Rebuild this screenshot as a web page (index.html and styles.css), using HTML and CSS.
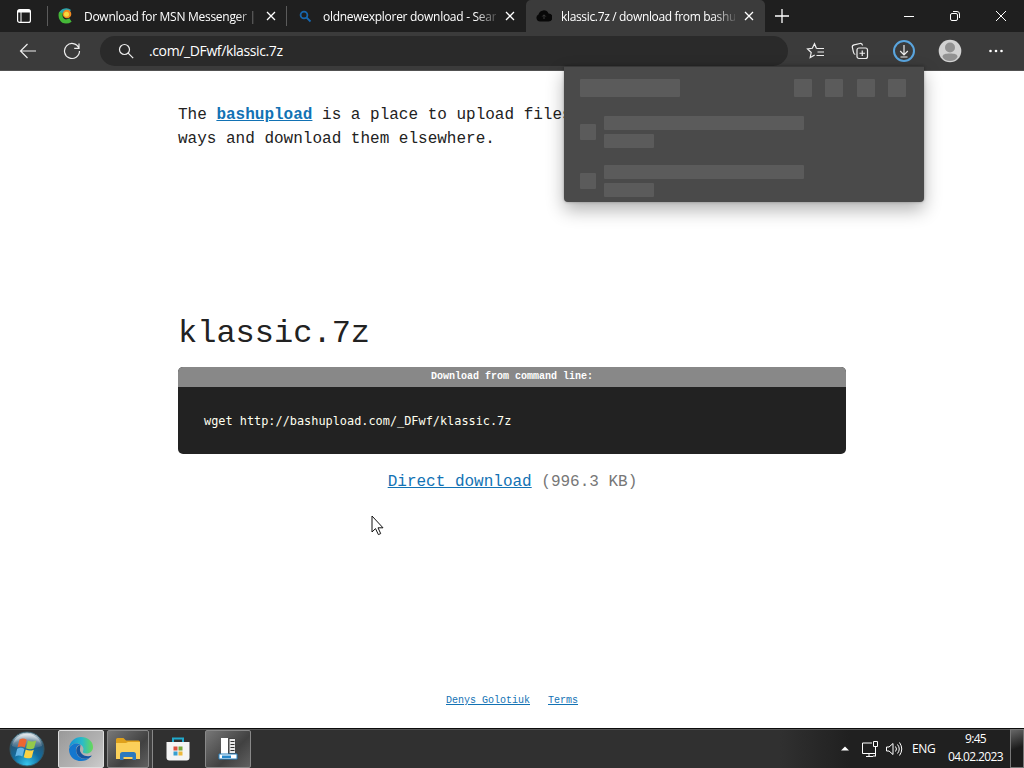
FILE: index.html
```html
<!DOCTYPE html>
<html lang="en">
<head>
  <meta charset="UTF-8">
  <title>klassic.7z / download from bashupload</title>
  <link rel="stylesheet" href="styles.css">
</head>
<body>
  <div class="tabs">
    <div class="tab-actions">
      <svg width="16" height="16" viewBox="0 0 16 16" fill="none" stroke="#fff" stroke-width="1.2"><rect x="1.600" y="1.600" width="12.800" height="12.800" rx="2"/><path d="M2 3.200h12" stroke-width="2.600"/><path d="M5 4v10" stroke-width="1"/></svg>
    </div>
    <div class="tab tab-first">
      <svg class="favicon" width="16" height="16" viewBox="0 0 16 16"><path d="M12 3.200C9.500 .8 4 1.500 2.500 5.500" fill="none" stroke="#2ba6b0" stroke-width="3"/><path d="M3 4.500C1.500 9 4 13.500 8 13.500c2 0 3.500-.8 4.500-1.500" fill="none" stroke="#45b838" stroke-width="4"/><circle cx="9" cy="6" r="4.300" fill="#f28a22"/><circle cx="8.500" cy="6.300" r="2.500" fill="#f8dc3d"/></svg>
      <span class="tab-title">Download for MSN Messenger |</span>
      <svg class="close" width="10" height="10" viewBox="0 0 10 10"><path d="M1 1l8 8M9 1L1 9"/></svg>
    </div>
    <div class="tab tab-second">
      <svg class="favicon" width="16" height="16" viewBox="0 0 16 16" fill="none" stroke="#1767ae" stroke-width="1.800"><circle cx="7" cy="7" r="3.400"/><path d="M9.500 9.500l4 4"/></svg>
      <span class="tab-title">oldnewexplorer download - Sear</span>
      <svg class="close" width="10" height="10" viewBox="0 0 10 10"><path d="M1 1l8 8M9 1L1 9"/></svg>
    </div>
    <div class="tab tab-active">
      <svg class="favicon" width="16" height="16" viewBox="0 0 16 16"><path d="M4 13.500a3.700 3.700 0 0 1-1.500-7A5.300 5.300 0 0 1 12.500 5.500 4 4 0 0 1 12.300 13.500z" fill="#080808"/><path d="M8 11V7M6.300 8.500L8 6.800l1.700 1.700" fill="none" stroke="#3b3b3b"/></svg>
      <span class="tab-title">klassic.7z / download from bashu</span>
      <svg class="close" width="10" height="10" viewBox="0 0 10 10"><path d="M1 1l8 8M9 1L1 9"/></svg>
    </div>
    <svg class="new-tab" width="14" height="14" viewBox="0 0 14 14"><path d="M7 0v14M0 7h14"/></svg>
    <div class="window-buttons">
      <svg width="12" height="12" viewBox="0 0 12 12"><path d="M1 6.500h10"/></svg>
      <svg width="12" height="12" viewBox="0 0 12 12"><rect x="1.500" y="3.500" width="7" height="7" rx="1.500"/><path d="M4 1.500h4a2.500 2.500 0 0 1 2.500 2.500v4"/></svg>
      <svg width="12" height="12" viewBox="0 0 12 12"><path d="M1 1l10 10M11 1L1 11"/></svg>
    </div>
  </div>

  <div class="toolbar">
    <svg class="back" width="18" height="18" viewBox="0 0 18 18"><path d="M17 9H1.500M8.500 2l-7 7 7 7"/></svg>
    <svg class="reload" width="18" height="18" viewBox="0 0 18 18"><path d="M15.800 5.800A7.500 7.500 0 1 0 16.500 9M16 1.500v4.800h-4.800"/></svg>
    <div class="address">
      <svg width="16" height="16" viewBox="0 0 16 16"><circle cx="6.500" cy="6.500" r="5"/><path d="M10.200 10.200l5 5"/></svg>
      <span>.com/_DFwf/klassic.7z</span>
    </div>
    <div class="tools">
      <svg width="20" height="18" viewBox="0 0 20 18"><path d="M10.500 6.500L8.500 1.800 6.300 6.300 1.500 7l3.700 3.500-1 5 4.500-2.500M10.500 6.500h7.500M11.500 10h6.500M10.500 13.500h7.500"/></svg>
      <svg width="20" height="18" viewBox="0 0 20 18"><rect x="7" y="6" width="10.500" height="10.500" rx="2"/><path d="M12.250 8.500v5.500M9.500 11.250h5.500M5.300 12.500C4 12.300 3.700 11.500 3.400 10L2.400 5.500C2 4 2.500 3.200 4 2.800l6-1.300c1.500-.3 2.300.5 2.600 2"/></svg>
      <svg width="24" height="24" viewBox="0 0 24 24"><circle cx="12" cy="12" r="10" stroke="#5aa5de" stroke-width="2"/><path d="M12 6v9.500M8.200 12l3.800 3.800 3.800-3.800M8.500 18h7"/></svg>
      <svg width="24" height="24" viewBox="0 0 24 24" stroke="none"><circle cx="12" cy="12" r="11.300" fill="#d2d2d2"/><circle cx="12" cy="8.500" r="5" fill="#929292"/><path d="M4.500 18c0-3 3-3.500 7.500-3.500s7.500.5 7.500 3.500c-1.500 2.500-4 4-7.500 4s-6-1.500-7.500-4z" fill="#929292"/></svg>
      <svg width="18" height="18" viewBox="0 0 18 18" stroke="none" fill="#fff"><circle cx="3.500" cy="9" r="1.300"/><circle cx="9" cy="9" r="1.300"/><circle cx="14.500" cy="9" r="1.300"/></svg>
    </div>
  </div>

  <div class="page">
    <p class="intro">The <a href="#"><b>bashupload</b></a> is a place to upload files in simple<br>ways and download them elsewhere.</p>
    <h1>klassic.7z</h1>
    <div class="command">
      <div class="command-title">Download from command line:</div>
      <code>wget http://bashupload.com/_DFwf/klassic.7z</code>
    </div>
    <p class="direct"><a href="#">Direct download</a> (996.3 KB)</p>
    <div class="footer"><a href="#">Denys Golotiuk</a><a href="#">Terms</a></div>
  </div>

  <div class="downloads">
    <div class="downloads-head">
      <i class="bone title"></i><i class="bone button"></i><i class="bone button"></i><i class="bone button"></i><i class="bone button"></i>
    </div>
    <div class="item"><i class="bone icon"></i><div><i class="bone name"></i><i class="bone status"></i></div></div>
    <div class="item"><i class="bone icon"></i><div><i class="bone name"></i><i class="bone status"></i></div></div>
  </div>

  <svg class="cursor" width="14" height="22" viewBox="0 0 14 22"><path d="M1 1v16l3.500-3.400 2.900 6 2.300-1-2.700-5.800h5z" fill="#fff" stroke="#111"/></svg>

  <div class="taskbar">
    <svg class="start" width="36" height="36" viewBox="0 0 36 36">
      <defs>
        <radialGradient id="orb" cx=".5" cy=".95" r=".9"><stop offset="0" stop-color="#35c6ed"/><stop offset=".45" stop-color="#126da0"/><stop offset=".8" stop-color="#295573"/><stop offset="1" stop-color="#b5c7d1"/></radialGradient>
        <linearGradient id="shine" x2="0" y2="1"><stop offset="0" stop-color="#fff" stop-opacity=".7"/><stop offset="1" stop-color="#fff" stop-opacity=".05"/></linearGradient>
      </defs>
      <circle cx="18" cy="18" r="17" fill="url(#orb)" stroke="#315969"/>
      <path d="M3 15a15.300 15.300 0 0 1 30 0c-7 3-22 4-30 0z" fill="url(#shine)"/>
      <path d="M10.500 8.500c2.800-1.500 5-1 7.200.3l-2 7.800c-2.200-1.300-4.500-1.600-7.200-.3z" fill="#ed6632"/>
      <path d="M19 9.500c2.700 1.400 5.400 1.300 8.200 0l-2.100 7.800c-2.700 1.300-5.400 1.300-8.100-.1z" fill="#94c94b"/>
      <path d="M8.200 17.700c2.700-1.400 5-1.100 7.200.2l-2 7.700c-2.300-1.300-4.500-1.500-7.200-.2z" fill="#65b5e6"/>
      <path d="M16.700 18.500c2.700 1.500 5.400 1.400 8.100.2l-2.100 7.700c-2.600 1.200-5.400 1.300-8-.2z" fill="#fbd244"/>
    </svg>
    <div class="task task-current">
      <svg width="26" height="26" viewBox="0 0 26 26">
        <defs><linearGradient id="edge" x1="0" x2="1"><stop offset="0" stop-color="#1690d7"/><stop offset=".55" stop-color="#2abbc9"/><stop offset="1" stop-color="#68d955"/></linearGradient></defs>
        <path d="M1 12C2 5 7 1 13 1c7 0 12 4.500 12 10 0 4-3 6.500-6.500 6.500-2.500 0-4-1-3.500-2.300.8-1.500.7-4.400-1.500-6C10 6.500 4 7 1 12z" fill="url(#edge)"/>
        <path d="M1 13C3 7.500 9 6 12.500 9 8.500 9 7 13 8.500 17c1.800 5 7.500 7.500 13.500 4.500C16 28 1 26 1 13z" fill="#1477ce"/>
        <path d="M12.500 9C8.500 10 7.300 14 9 17.800c2 4.500 8 6.500 13 3.700.8-.5 1.300-1 1.700-2C18 22 11 18 12 12.500z" fill="#15559f"/>
      </svg>
    </div>
    <div class="task task-folder">
      <svg width="26" height="24" viewBox="0 0 26 24"><path d="M1 2.500Q1 1 2.500 1h6L11 3.500h12.500Q25 3.500 25 5v6H1z" fill="#dfa11c"/><path d="M1 6h10l2-1h12v17H1z" fill="#fbd05a"/><path d="M5 23v-5.500q0-2.500 2.500-2.500h11q2.500 0 2.500 2.500V23h-3.500v-3h-9v3z" fill="#2b79bd"/></svg>
    </div>
    <div class="stack"></div>
    <div class="pinned">
      <svg width="26" height="26" viewBox="0 0 26 26"><path d="M8 7V2.500h10V7" fill="none" stroke="#20a9cc" stroke-width="2"/><path d="M1.500 6h23v15.500q0 3-3 3h-17q-3 0-3-3z" fill="#f4f4f4"/><path d="M8.500 10.500h4v4h-4z" fill="#dc503e"/><path d="M13.500 10.500h4v4h-4z" fill="#78a93b"/><path d="M8.500 15.500h4v4h-4z" fill="#379fd0"/><path d="M13.500 15.500h4v4h-4z" fill="#edb83a"/></svg>
    </div>
    <div class="task task-app">
      <svg width="22" height="24" viewBox="0 0 22 24"><path d="M4 1h7v18H4z" fill="#fff"/><path d="M12 1.500h6.500v15H12z" fill="#e9e9e9" stroke="#444"/><path d="M13.500 4.500h4M13.500 7.500h4M13.500 10.500h4M13.500 13.500h4" stroke="#333"/><path d="M2 17h18v5H2z" fill="#fff" stroke="#2680be"/><path d="M5 18.500h9V21H5z" fill="#2789cc"/></svg>
    </div>
    <div class="tray">
      <svg width="8" height="5" viewBox="0 0 8 5"><path d="M0 4.500L4 .5l4 4z" fill="#fff"/></svg>
      <svg class="network" width="18" height="18" viewBox="0 0 18 18"><path d="M11 3H1.500v10.500H14M5 16.500h7M8 13.500v3M14.500 6.500v9.500M12.500 1.500h4v5h-4zM12 16h3"/></svg>
      <svg class="volume" width="18" height="16" viewBox="0 0 18 16"><path d="M1.500 6h2.500l4-3.500v11L4 10H1.500zM10.500 5.500q2 2.500 0 5M12.500 3.500q3.500 4.500 0 9M14.500 1.500q4.500 6.500 0 13"/></svg>
      <span class="lang">ENG</span>
      <div class="clock">9:45<br>04.02.2023</div>
    </div>
    <div class="show-desktop"></div>
  </div>
</body>
</html>
```
FILE: styles.css
```css
* {
  box-sizing: border-box;
}
body {
  margin: 0;
  width: 1024px;
  height: 768px;
  overflow: hidden;
  position: relative;
  background: #fff;
  color: #222;
  font-family: "Liberation Mono", monospace;
}
svg {
  display: block;
  flex: none;
}
a {
  color: #1272b4;
}

/* tab strip */
.tabs {
  display: flex;
  align-items: center;
  height: 32px;
  background: #1f1f1f;
  color: #fff;
  font: 12px "Open Sans", sans-serif;
}
.tab-actions {
  width: 47px;
  padding-left: 16px;
}
.tab {
  display: flex;
  align-items: center;
  height: 32px;
}
.tab-first::before,
.tab-second::before {
  content: "";
  width: 1px;
  height: 20px;
  background: #5b5b5b;
}
.tab-first {
  width: 239px;
}
.tab-second {
  width: 240px;
}
.tab-active {
  width: 239px;
  background: #3b3b3b;
  border-radius: 5px 5px 0 0;
}
.favicon {
  margin-left: 10px;
}
.tab-title {
  margin-left: 10px;
  width: 173px;
  overflow: hidden;
  white-space: nowrap;
  letter-spacing: -0.28px;
  -webkit-mask-image: linear-gradient(90deg, #000 152px, transparent 178px);
  mask-image: linear-gradient(90deg, #000 152px, transparent 178px);
}
.tab-second .tab-title {
  letter-spacing: -0.28px;
}
.tab-active .tab-title {
  margin-left: 9px;
  width: 174px;
  letter-spacing: -0.34px;
}
.close {
  margin-left: 9px;
  fill: none;
  stroke: #fff;
  stroke-width: 1.3;
}
.new-tab {
  margin-left: 10px;
  fill: none;
  stroke: #fff;
  stroke-width: 1.3;
}
.window-buttons {
  display: flex;
  gap: 34px;
  margin-left: auto;
  padding-right: 17px;
  fill: none;
  stroke: #fff;
}

/* toolbar */
.toolbar {
  display: flex;
  align-items: center;
  height: 39px;
  background: #3b3b3b;
  border-bottom: 1px solid #515151;
  fill: none;
  stroke: #eee;
  stroke-width: 1.2;
}
.back {
  margin-left: 19px;
}
.reload {
  margin-left: 26px;
}
.address {
  display: flex;
  align-items: center;
  width: 688px;
  height: 30px;
  margin-left: 19px;
  padding-left: 18px;
  border-radius: 15px;
  background: #2a2a2a;
  color: #fff;
  font: 14px "Open Sans", sans-serif;
  letter-spacing: -0.38px;
}
.address span {
  margin-left: 15px;
  margin-top: -1px;
}
.tools {
  display: flex;
  align-items: center;
  margin-left: 18px;
}
.tools svg:nth-child(2) {
  margin-left: 24px;
}
.tools svg:nth-child(3) {
  margin-left: 22px;
}
.tools svg:nth-child(4) {
  margin-left: 22px;
}
.tools svg:nth-child(5) {
  margin-left: 25px;
}

/* page */
.page {
  height: 657px;
  padding: 32px 178px 0;
}
.intro {
  margin: 0;
  font-size: 16px;
  line-height: 24px;
  white-space: nowrap;
}
h1 {
  margin: 165px 0 0;
  font-size: 32px;
  font-weight: normal;
  line-height: 36px;
}
.command {
  height: 87px;
  margin-top: 15px;
  border-radius: 5px;
  overflow: hidden;
  background: #222;
  color: #fffff0;
}
.command-title {
  height: 20px;
  background: #888;
  color: #fff;
  font-size: 10px;
  font-weight: bold;
  line-height: 19px;
  text-align: center;
}
code {
  display: block;
  padding: 25px 26px;
  font: 11.88px/18px "DejaVu Sans Mono", monospace;
}
.direct {
  margin: 16px 0 0;
  padding-left: 1px;
  color: #777;
  font-size: 16px;
  line-height: 24px;
  text-align: center;
}
.footer {
  display: flex;
  justify-content: center;
  gap: 18px;
  margin-top: 199px;
  font-size: 10px;
  line-height: 16px;
}

/* downloads flyout */
.downloads {
  position: absolute;
  left: 564px;
  top: 66px;
  width: 360px;
  height: 136px;
  padding: 12px 18px 0 16px;
  border-radius: 0 0 4px 4px;
  background: #4a4a4a;
  border-top: 1px solid #383838;
  box-shadow: 0 8px 18px rgba(0, 0, 0, 0.3), 0 0 3px rgba(0, 0, 0, 0.3);
}
.downloads-head {
  display: flex;
  gap: 13.3px;
}
.bone {
  display: block;
  background: #5b5b5b;
  border-radius: 1px;
}
.title {
  width: 100px;
  height: 18px;
  margin-right: auto;
}
.button {
  width: 18px;
  height: 18px;
}
.item {
  display: flex;
  align-items: center;
  gap: 8px;
  height: 31px;
  margin-top: 18px;
}
.downloads-head + .item {
  margin-top: 19px;
}
.icon {
  width: 16px;
  height: 16px;
}
.name {
  width: 200px;
  height: 14px;
}
.status {
  width: 50px;
  height: 14px;
  margin-top: 4px;
}

.cursor {
  position: absolute;
  left: 371px;
  top: 515px;
}

/* taskbar */
.taskbar {
  display: flex;
  align-items: center;
  height: 40px;
  background: linear-gradient(90deg, #303030 0, #303030 780px, #202020 850px);
  border-top: 1px solid #0c0c0c;
  box-shadow: inset 0 1px #555;
}
.start {
  margin-left: 9px;
}
.task {
  display: flex;
  align-items: center;
  justify-content: center;
  width: 46px;
  height: 38px;
  border: 1px solid #888;
  border-radius: 2px;
  background: linear-gradient(135deg, #777, #414141 60%, #606060);
}
.task-current {
  margin-left: 13px;
  border-color: #ddd;
  background: linear-gradient(135deg, #999, #b2b2b2 60%, #ccc);
}
.task-folder {
  width: 42px;
  margin-left: 3px;
}
.stack {
  width: 4px;
  height: 38px;
  border-right: 1px solid #888;
  background: #404040;
}
.pinned {
  margin-left: 12px;
}
.task-app {
  margin-left: 14px;
}
.tray {
  display: flex;
  align-items: center;
  margin-left: auto;
  color: #fff;
  font: 12px/18px "Open Sans", sans-serif;
  fill: none;
  stroke: #fff;
}
.tray svg:first-child {
  stroke: none;
}
.network {
  margin-left: 12px;
}
.volume {
  margin-left: 6px;
}
.lang {
  width: 25px;
  margin-left: 9px;
  letter-spacing: -0.3px;
}
.clock {
  width: 57px;
  margin-left: 10px;
  margin-top: -2px;
  letter-spacing: -0.64px;
  text-align: center;
  white-space: nowrap;
}
.show-desktop {
  width: 14px;
  height: 39px;
  margin-left: 6px;
  border: 1px solid #777;
  background: linear-gradient(160deg, #666, #1c1c1c 50%);
}
```
